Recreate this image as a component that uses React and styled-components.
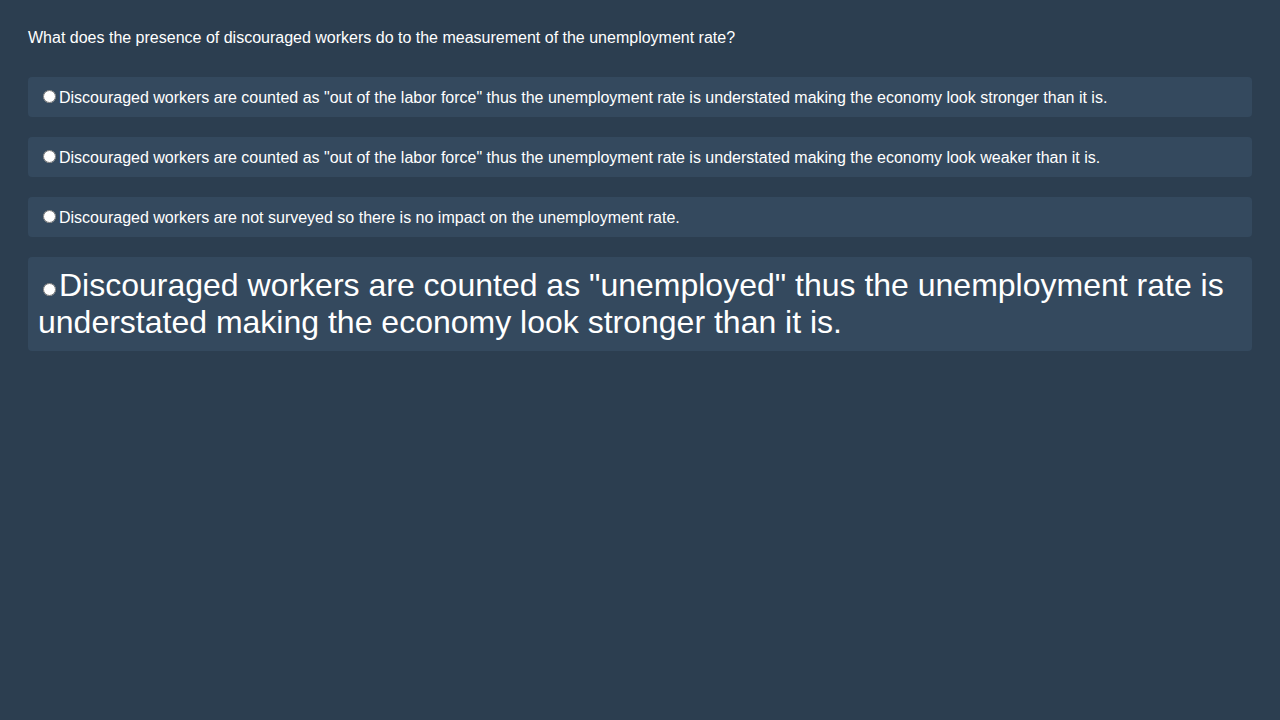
import React from "react";
import styled, { createGlobalStyle } from "styled-components";

const Global = createGlobalStyle`
  html, body { margin: 0; padding: 0; background: #2c3e50; }
  body { font-family: "Liberation Sans", Arial, sans-serif; color: #fff; }
`;

const Page = styled.div`
  padding: 28px;
  min-height: 720px;
  box-sizing: border-box;
  background: #2c3e50;
`;

const Question = styled.div`
  font-size: 16px;
  line-height: 18px;
  padding-top: 1px;
  margin-bottom: 30px;
`;

const Options = styled.div`
  display: flex;
  flex-direction: column;
  gap: 20px;
`;

const Option = styled.label`
  display: block;
  background: #34495e;
  border-radius: 4px;
  padding: 10px;
  font-size: ${(p) => (p.$big ? "32px" : "16px")};
  color: #fff;
  cursor: pointer;
`;

const Radio = styled.input.attrs({ type: "radio" })`
  margin: 3px 3px 0 5px;
`;

const options = [
  { text: 'Discouraged workers are counted as "out of the labor force" thus the unemployment rate is understated making the economy look stronger than it is.' },
  { text: 'Discouraged workers are counted as "out of the labor force" thus the unemployment rate is understated making the economy look weaker than it is.' },
  { text: "Discouraged workers are not surveyed so there is no impact on the unemployment rate." },
  { text: 'Discouraged workers are counted as "unemployed" thus the unemployment rate is understated making the economy look stronger than it is.', big: true },
];

export default function App() {
  return (
    <>
      <Global />
      <Page>
        <Question>What does the presence of discouraged workers do to the measurement of the unemployment rate?</Question>
        <Options>
          {options.map((o, i) => (
            <Option key={i} $big={o.big}>
              <Radio name="q" />
              {o.text}
            </Option>
          ))}
        </Options>
      </Page>
    </>
  );
}
